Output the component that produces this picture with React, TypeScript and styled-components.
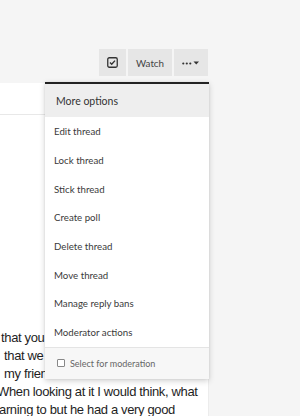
import React from "react";
import styled, { createGlobalStyle } from "styled-components";

const Global = createGlobalStyle`
  html, body { margin: 0; padding: 0; background: #f5f5f5; }
  body { width: 300px; height: 416px; overflow: hidden; }
`;

const Page = styled.div`
  width: 209px;
  height: 416px;
  display: flex;
  flex-direction: column;
`;

const ToolbarWrap = styled.div`
  position: relative;
  padding-top: 49px;
  display: flex;
  justify-content: flex-end;
  gap: 2px;
  padding-right: 1px;
`;

const Btn = styled.button<{ $w: number }>`
  width: ${(p) => p.$w}px;
  height: 27px;
  border: none;
  background: #e6e6e6;
  display: flex;
  align-items: center;
  justify-content: center;
  padding: 0;
  font-family: Lato, "Open Sans", sans-serif;
  font-size: 9.8px;
  color: #444;
`;

const Panel = styled.div`
  margin-top: 7px;
  flex: 1;
  background: #fff;
  border-right: 1px solid #ececec;
  display: flex;
  flex-direction: column;
  overflow: hidden;
`;

const PanelHead = styled.div`
  height: 31px;
  flex-shrink: 0;
  border-bottom: 1px solid #e8e8e8;
`;

const Body = styled.div`
  margin-top: auto;
  margin-bottom: -3px;
  font-family: "Liberation Sans", Arial, sans-serif;
  font-size: 13px;
  letter-spacing: -0.35px;
  line-height: 18px;
  color: #1e1e1e;
`;

const Line = styled.div<{ $x: number }>`
  white-space: nowrap;
  margin-left: ${(p) => p.$x}px;
`;

const Menu = styled.div`
  position: absolute;
  left: 45px;
  top: 82px;
  width: 164px;
  background: #fff;
  border-top: 2px solid #222;
  box-shadow: 0 2px 6px rgba(0, 0, 0, 0.18), 0 0 2px rgba(0, 0, 0, 0.08);
  font-family: Lato, "Open Sans", sans-serif;
  z-index: 2;
`;

const MenuHeader = styled.div`
  height: 33px;
  background: #eeeeee;
  display: flex;
  align-items: center;
  padding-left: 11px;
  font-size: 10.5px;
  color: #333;
`;

const Item = styled.div`
  height: 28.7px;
  display: flex;
  align-items: center;
  padding-left: 9px;
  font-size: 9.7px;
  color: #3a3a3a;
`;

const Footer = styled.div`
  height: 31px;
  border-top: 1px solid #e4e4e4;
  background: #f7f7f7;
  display: flex;
  align-items: center;
  padding-left: 12px;
  gap: 5px;
  font-size: 9px;
  color: #666;
`;

const Box = styled.span`
  width: 6px;
  height: 6px;
  border: 1px solid #888;
  border-radius: 1px;
  background: #fff;
`;

const CheckIcon = () => (
  <svg width="11" height="11" viewBox="0 0 11 11">
    <rect x="0.75" y="0.75" width="9.5" height="9.5" rx="1.5" fill="none" stroke="#333" strokeWidth="1.3" />
    <path d="M3 5.6 L4.7 7.2 L8 3.6" fill="none" stroke="#333" strokeWidth="1.4" />
  </svg>
);

const MoreIcon = () => (
  <svg width="19" height="6" viewBox="0 0 19 6">
    <circle cx="1.3" cy="3.5" r="1.1" fill="#333" />
    <circle cx="4.8" cy="3.5" r="1.1" fill="#333" />
    <circle cx="8.3" cy="3.5" r="1.1" fill="#333" />
    <path d="M11.5 1.5 L17 1.5 L14.25 4.5 Z" fill="#333" />
  </svg>
);

const items = [
  "Edit thread",
  "Lock thread",
  "Stick thread",
  "Create poll",
  "Delete thread",
  "Move thread",
  "Manage reply bans",
  "Moderator actions",
];

export default function App() {
  return (
    <>
      <Global />
      <Page>
        <ToolbarWrap>
          <Btn $w={27}>
            <CheckIcon />
          </Btn>
          <Btn $w={44}>Watch</Btn>
          <Btn $w={34}>
            <MoreIcon />
          </Btn>
          <Menu>
            <MenuHeader>More options</MenuHeader>
            {items.map((t) => (
              <Item key={t}>{t}</Item>
            ))}
            <Footer>
              <Box />
              Select for moderation
            </Footer>
          </Menu>
        </ToolbarWrap>
        <Panel>
          <PanelHead />
          <Body>
            <Line $x={1}>that you</Line>
            <Line $x={4}>that we</Line>
            <Line $x={4}>my friend</Line>
            <Line $x={-3}>When looking at it I would think, what</Line>
            <Line $x={-1}>arning to but he had a very good</Line>
          </Body>
        </Panel>
      </Page>
    </>
  );
}
